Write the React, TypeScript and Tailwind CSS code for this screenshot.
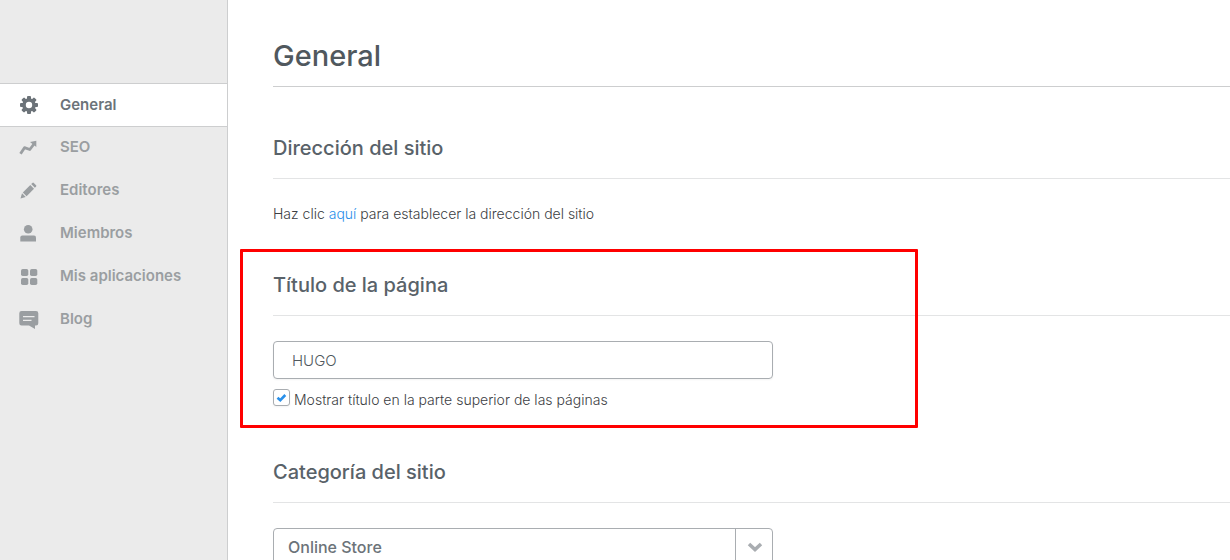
import type { ReactNode } from "react";

type NavItem = { label: string; icon: ReactNode; active?: boolean };

const gearTeeth = [0, 45, 90, 135, 180, 225, 270, 315];

const navItems: NavItem[] = [
  {
    label: "General",
    active: true,
    icon: (
      <>
        {gearTeeth.map((a) => (
          <rect key={a} x="8" y="1" width="4" height="5" rx="1" transform={`rotate(${a} 10 10)`} />
        ))}
        <circle cx="10" cy="10" r="5" fill="none" stroke="currentColor" strokeWidth="3.6" />
      </>
    ),
  },
  {
    label: "SEO",
    icon: (
      <>
        <path d="M1.5 15.8 5.5 9.7 10.8 11.5 15 6" fill="none" stroke="currentColor" strokeWidth="2.8" strokeLinejoin="round" />
        <path d="M11 4 17.3 2.8 17.3 9Z" />
      </>
    ),
  },
  {
    label: "Editores",
    icon: (
      <>
        <path d="M1.5 17.5 3 12.3 6.7 16Z" />
        <path d="M3.8 11.4 11.3 4 15 7.7 7.6 15.2Z" />
        <path d="M12.2 3.1 13.4 1.9Q14.1 1.3 14.8 1.9L17.1 4.2Q17.7 4.9 17.1 5.6L15.9 6.8Z" />
      </>
    ),
  },
  {
    label: "Miembros",
    icon: (
      <>
        <circle cx="9.2" cy="5.2" r="4.3" />
        <path d="M1.3 17.5V13.5Q1.3 11.5 3.3 11.5H15Q17 11.5 17 13.5V17.5Z" />
      </>
    ),
  },
  {
    label: "Mis aplicaciones",
    icon: (
      <>
        <rect x="2" y="2" width="7.3" height="7" rx="1.7" />
        <rect x="11" y="2" width="7.3" height="7" rx="1.7" />
        <rect x="2" y="11" width="7.3" height="7" rx="1.7" />
        <rect x="11" y="11" width="7.3" height="7" rx="1.7" />
      </>
    ),
  },
  {
    label: "Blog",
    icon: (
      <>
        <path d="M2.5 1H17Q19.3 1 19.3 3.3V13.2Q19.3 15.5 17 15.5H16V19L10 15.5H2.5Q.3 15.5 .3 13.2V3.3Q.3 1 2.5 1Z" />
        <path d="M4 6.7H15.5M4 10.3H12.5" stroke="#ebebeb" strokeWidth="1.2" />
      </>
    ),
  },
];

function Sidebar() {
  return (
    <aside className="w-[228px] shrink-0 border-r border-[#cdcecf] bg-[#ebebeb] pt-[83px]">
      <nav className="flex flex-col">
        {navItems.map((item) => (
          <a
            key={item.label}
            href="#"
            aria-current={item.active ? "page" : undefined}
            className={
              item.active
                ? "-mb-px flex h-11 items-center gap-[21px] border-y border-[#cdcecf] bg-white pl-[19px] text-[15px] font-semibold text-[#6c7379]"
                : "flex h-[43px] items-center gap-[21px] pl-[19px] text-[15px] font-semibold text-[#9a9ea1]"
            }
          >
            <svg viewBox="0 0 20 20" className="h-5 w-5 shrink-0" fill="currentColor" aria-hidden="true">
              {item.icon}
            </svg>
            {item.label}
          </a>
        ))}
      </nav>
    </aside>
  );
}

function Section({ title, children }: { title: string; children: ReactNode }) {
  return (
    <section className="relative mt-[47px]">
      <h2 className="border-b border-[#e3e4e5] pb-4 text-xl leading-7 font-medium text-[#596269]">{title}</h2>
      <div className="pt-[25px]">{children}</div>
    </section>
  );
}

export default function App() {
  return (
    <div className="flex h-screen overflow-hidden bg-white font-['Inter','Liberation_Sans',sans-serif]">
      <Sidebar />
      <main className="min-w-0 flex-1 pt-9 pl-[45px] text-sm font-light text-[#3c4043]">
        <h1 className="border-b border-[#cdcecf] pb-2.5 text-[29px] leading-10 font-medium text-[#50585e]">General</h1>

        <Section title="Dirección del sitio">
          <p className="leading-5">
            Haz clic{" "}
            <a href="#" className="text-[#2990ea]">
              aquí
            </a>{" "}
            para establecer la dirección del sitio
          </p>
        </Section>

        <Section title="Título de la página">
          <input
            type="text"
            aria-label="Título de la página"
            defaultValue="HUGO"
            className="block h-[38px] w-full max-w-[500px] rounded border border-[#a9adb1] bg-white px-[18px] text-[15px] text-[#50585e] shadow-xs"
          />
          <label className="mt-2.5 flex items-start gap-1 leading-[22px]">
            <span className="relative flex">
              <input
                type="checkbox"
                defaultChecked
                className="peer h-[17px] w-[17px] appearance-none rounded-[3px] border border-[#a9adb1] bg-white shadow-xs"
              />
              <svg
                viewBox="0 0 17 17"
                className="pointer-events-none absolute inset-0 hidden h-[17px] w-[17px] peer-checked:block"
                aria-hidden="true"
              >
                <path d="M4.5 8.7 7.3 11.2 12.3 6" fill="none" stroke="#2990ea" strokeWidth="2.6" />
              </svg>
            </span>
            Mostrar título en la parte superior de las páginas
          </label>
          <div className="pointer-events-none absolute -top-[22px] -bottom-[17px] -left-[33px] w-[678px] rounded-[1px] border-3 border-[#ff0000]" />
        </Section>

        <Section title="Categoría del sitio">
          <div className="relative max-w-[500px]">
            <select
              aria-label="Categoría del sitio"
              className="block h-[38px] w-full appearance-none rounded border border-[#a9adb1] bg-white px-3.5 text-base font-medium text-[#6c7379]"
            >
              <option>Online Store</option>
            </select>
            <span className="pointer-events-none absolute inset-y-0 right-0 flex w-[38px] items-center justify-center border-l border-[#a9adb1]">
              <svg viewBox="0 0 16 10" className="h-2.5 w-4" aria-hidden="true">
                <path d="M2 2 8 7.5 14 2" fill="none" stroke="#a9adb1" strokeWidth="3.6" />
              </svg>
            </span>
          </div>
        </Section>
      </main>
    </div>
  );
}
